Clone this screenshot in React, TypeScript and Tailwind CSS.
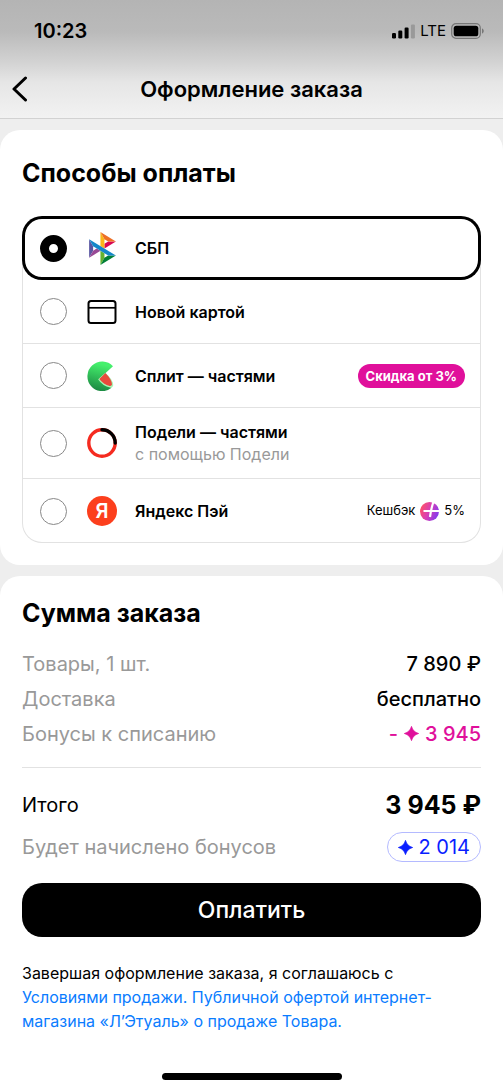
import { useState } from 'react';
import type { ReactNode } from 'react';

const SbpLogo = () => (
  <svg className="h-[33px] w-[27px]" viewBox="0 0 97.3 120" aria-hidden="true">
    <path fill="#5b57a2" d="M0 26.12l14.532 25.975v15.844L.017 93.863z" />
    <path fill="#d90751" d="M55.797 42.643l13.617-8.346 27.868-.026-41.485 25.414z" />
    <path fill="#fab718" d="M55.72 25.967l.077 34.39-14.566-8.95V0z" />
    <path fill="#ed6f26" d="M97.282 34.271l-27.869.026-13.693-8.33L41.231 0z" />
    <path fill="#63b22f" d="M55.797 94.007V77.322l-14.566-8.78.008 51.458z" />
    <path fill="#017f36" d="M41.24 120l14.556-25.993 13.583-8.27 27.843-.034z" />
    <path fill="#984995" d="M.017 93.863l41.333-25.32-13.896-8.526-12.922 7.922z" />
    <path fill="#1487c9" d="M69.38 85.737L14.531 52.095 0 26.12l97.223 59.583z" />
  </svg>
);

const CardIcon = () => (
  <svg className="size-[30px]" viewBox="0 0 30 30" fill="none" stroke="#000" strokeWidth="2" aria-hidden="true">
    <rect x="1.5" y="4" width="27" height="22" rx="2.5" />
    <path d="M1.5 10.8h27" strokeWidth="1.7" />
  </svg>
);

const SplitIcon = () => (
  <svg className="size-[30px]" viewBox="0 0 30 30" aria-hidden="true">
    <defs>
      <linearGradient id="split-green" x1="0.6" y1="0" x2="0.4" y2="1">
        <stop offset="0.1" stopColor="#45f06c" />
        <stop offset="1" stopColor="#1b8742" />
      </linearGradient>
    </defs>
    <path fill="url(#split-green)" d="M26 5.2A14.8 14.8 0 1 0 24.6 26.8L12 18L26 5.2z" />
    <path fill="#a8f5b4" d="M11.2 18.4L12 17.6L18.4 12Q26.4 18.6 26.2 24.6Q25.8 27 23 26.6Q15.8 25 11.2 18.4z" />
    <path fill="#e84a3c" d="M12.3 18.1L18.4 12Q25 18.6 25 23.6Q24.6 25.4 22.6 25Q16.4 23.6 12.3 18.1z" />
  </svg>
);

const PodeliIcon = () => (
  <svg className="size-[30px]" viewBox="0 0 30 30" fill="none" strokeWidth="3.4" aria-hidden="true">
    <circle cx="15" cy="15" r="13.2" stroke="#f52b20" />
    <path d="M15 1.8A13.2 13.2 0 0 1 28.2 15" stroke="#000" strokeLinecap="round" />
  </svg>
);

const YandexIcon = () => (
  <span className="flex size-[30px] items-center justify-center rounded-full bg-[#fc3f1d] text-xl font-semibold text-white">
    Я
  </span>
);

const PlusIcon = () => (
  <svg className="size-[19px]" viewBox="0 0 19 19" aria-hidden="true">
    <defs>
      <linearGradient id="plus-fill" x1="0" y1="0.3" x2="1" y2="0.7">
        <stop offset="0" stopColor="#ff5263" />
        <stop offset="0.45" stopColor="#d93fb4" />
        <stop offset="1" stopColor="#7d3bf2" />
      </linearGradient>
    </defs>
    <circle cx="9.5" cy="9.5" r="9.5" fill="url(#plus-fill)" />
    <path d="M3.5 9H19M13.4 0Q11 7 10 15" fill="none" stroke="#fff" strokeWidth="2.2" />
  </svg>
);

const Spark = () => (
  <svg className="size-[15px]" viewBox="0 0 15 15" fill="currentColor" aria-hidden="true">
    <path d="M7.5 0.4Q9 6 14.6 7.5Q9 9 7.5 14.6Q6 9 0.4 7.5Q6 6 7.5 0.4z" stroke="currentColor" strokeWidth="0.8" />
  </svg>
);

const METHODS: { id: string; title: string; subtitle?: string; icon: ReactNode; extra?: ReactNode }[] = [
  { id: 'sbp', title: 'СБП', icon: <SbpLogo /> },
  { id: 'card', title: 'Новой картой', icon: <CardIcon /> },
  {
    id: 'split',
    title: 'Сплит — частями',
    icon: <SplitIcon />,
    extra: (
      <span className="rounded-full bg-[#e0109b] px-2 text-[13px] leading-6 font-bold text-white">Скидка от 3%</span>
    ),
  },
  { id: 'podeli', title: 'Подели — частями', subtitle: 'с помощью Подели', icon: <PodeliIcon /> },
  {
    id: 'yandex',
    title: 'Яндекс Пэй',
    icon: <YandexIcon />,
    extra: (
      <span className="flex items-center gap-[5px] text-[13px]">
        Кешбэк
        <PlusIcon />
        5%
      </span>
    ),
  },
];

function StatusBar() {
  return (
    <div className="flex h-[60px] items-center justify-between pr-[19px] pl-[34px] pt-0.5">
      <span className="text-xl font-semibold">10:23</span>
      <div className="flex items-center gap-[5px]">
        <svg className="h-[15px] w-[23px]" viewBox="0 0 23 15" aria-hidden="true">
          <rect x="0" y="9" width="4" height="5.5" rx="1.2" />
          <rect x="6.3" y="6.5" width="4" height="8" rx="1.2" />
          <rect x="12.6" y="3.5" width="4" height="11" rx="1.2" />
          <rect x="18.9" y="0.5" width="4" height="14" rx="1.2" fill="#999" />
        </svg>
        <span className="text-[15px]">LTE</span>
        <svg className="h-4 w-[33px]" viewBox="0 0 33 16" aria-hidden="true">
          <rect x="0.7" y="0.7" width="28.6" height="14.6" rx="4.3" fill="none" stroke="#777" strokeWidth="1.2" />
          <rect x="2.7" y="2.7" width="24.6" height="10.6" rx="2.6" />
          <path d="M31 5.3Q32.8 6.2 32.8 8T31 10.7z" fill="#777" />
        </svg>
      </div>
    </div>
  );
}

function SummaryRow({ label, children }: { label: string; children: ReactNode }) {
  return (
    <div className="flex h-[35px] items-center justify-between">
      <dt className="text-[#999]">{label}</dt>
      <dd className="flex items-center gap-1.5 font-medium">{children}</dd>
    </div>
  );
}

export default function App() {
  const [method, setMethod] = useState('sbp');

  return (
    <div className="flex min-h-screen flex-col bg-[#eee] font-['Inter',sans-serif] text-black">
      <header className="border-b border-[#d2d2d2] bg-[linear-gradient(#b4b4b4,#bababa_27%,#d2d2d2_52%,#e6e6e6_70%,#f2f2f2)]">
        <StatusBar />
        <div className="grid h-[58px] grid-cols-[48px_1fr_48px] items-center">
          <button type="button" aria-label="Назад" className="pl-3">
            <svg className="h-[26px] w-4" viewBox="0 0 16 26" fill="none" stroke="#000" strokeWidth="3" strokeLinecap="round" strokeLinejoin="round" aria-hidden="true">
              <path d="M13.5 2L2 13l11.5 11" />
            </svg>
          </button>
          <h1 className="text-center text-[22px] font-semibold">Оформление заказа</h1>
        </div>
      </header>

      <main className="flex flex-1 flex-col gap-[11px] pt-[11px]">
        <section className="rounded-[20px] bg-white px-[22px] pt-7 pb-[22px]">
          <h2 className="mb-7 text-[25px] leading-[30px] font-bold">Способы оплаты</h2>
          <div role="radiogroup" aria-label="Способы оплаты" className="rounded-[20px] shadow-[inset_0_0_0_1px_#e2e2e2]">
            {METHODS.map((item) => (
              <label
                key={item.id}
                className={`flex items-center pr-4 pl-[18px] ${item.subtitle ? 'h-[71px]' : 'h-16'} ${
                  item.id === method
                    ? 'rounded-[20px] bg-white shadow-[inset_0_0_0_3px_#000]'
                    : 'border-b border-[#e2e2e2] last:border-b-0'
                }`}
              >
                <input
                  type="radio"
                  name="method"
                  checked={item.id === method}
                  onChange={() => setMethod(item.id)}
                  className="size-[27px] shrink-0 appearance-none rounded-full border border-[#888] checked:border-[9px] checked:border-black"
                />
                <span className="ml-5 flex w-[30px] shrink-0 justify-center">{item.icon}</span>
                <span className="ml-[18px] flex-1">
                  <span className="block text-base leading-[22px] font-semibold">{item.title}</span>
                  {item.subtitle && <span className="block text-base leading-[22px] text-[#999]">{item.subtitle}</span>}
                </span>
                {item.extra}
              </label>
            ))}
          </div>
        </section>

        <section className="flex flex-1 flex-col rounded-t-[20px] bg-white px-[22px] pt-[22px] pb-[11px]">
          <h2 className="mb-[18px] text-[25px] leading-[30px] font-bold">Сумма заказа</h2>
          <dl className="text-xl">
            <SummaryRow label="Товары, 1 шт.">7 890 ₽</SummaryRow>
            <SummaryRow label="Доставка">бесплатно</SummaryRow>
            <SummaryRow label="Бонусы к списанию">
              <span className="flex items-center gap-1.5 text-[#e0109b]">
                - <Spark /> 3 945
              </span>
            </SummaryRow>
          </dl>
          <dl className="mt-4 border-t border-[#e2e2e2] pt-4 text-xl">
            <div className="flex h-[42px] items-center justify-between">
              <dt>Итого</dt>
              <dd className="text-[25px] font-bold">3 945 ₽</dd>
            </div>
            <div className="flex h-[42px] items-center justify-between">
              <dt className="text-[#999]">Будет начислено бонусов</dt>
              <dd className="flex h-[30px] items-center gap-1.5 rounded-full border border-[#b4baff] px-2.5 text-[#0a1eff]">
                <Spark /> 2 014
              </dd>
            </div>
          </dl>
          <button type="button" className="mt-[15px] h-[54px] rounded-[20px] bg-black text-[23px] font-medium text-white">
            Оплатить
          </button>
          <p className="mt-6 mb-10 text-base leading-6">
            Завершая оформление заказа, я соглашаюсь с{' '}
            <a href="#terms" className="text-[#0a7cff]">
              Условиями продажи. Публичной офертой интернет-магазина «Л’Этуаль» о продаже Товара.
            </a>
          </p>
          <div className="mx-auto mt-auto h-[7px] w-[180px] rounded-full bg-black" />
        </section>
      </main>
    </div>
  );
}
